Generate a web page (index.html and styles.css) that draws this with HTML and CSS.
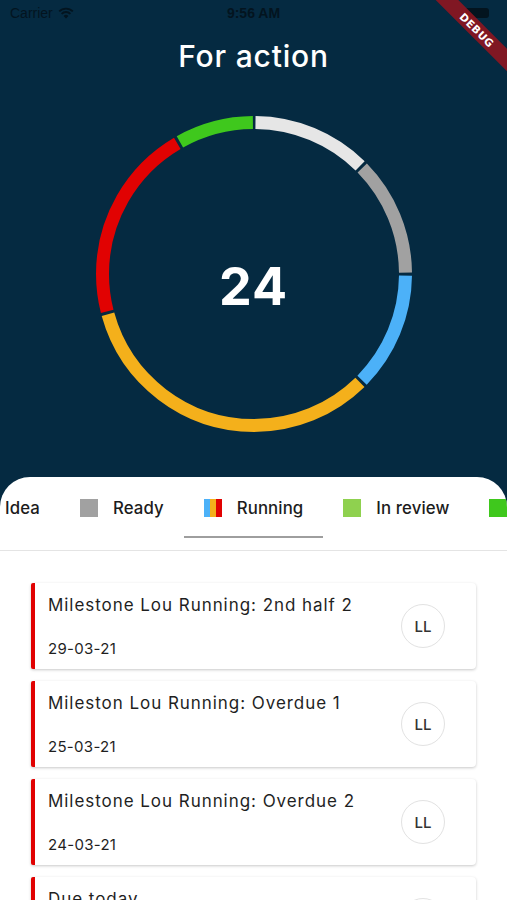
FILE: index.html
```html
<!DOCTYPE html>
<html>
<head>
<meta charset="utf-8">
<link rel="stylesheet" href="styles.css">
</head>
<body>
<div class="app">
  <header class="top">
    <div class="status">
      <div class="carrier">Carrier
        <svg class="wifi" width="16" height="12" viewBox="0 0 16 12"><path d="M8 11.5 L5.6 8.9 A3.4 3.4 0 0 1 10.4 8.9 Z" fill="#03141f"/><path d="M3.6 6.9 A6.2 6.2 0 0 1 12.4 6.9" stroke="#03141f" stroke-width="1.9" fill="none"/><path d="M1.2 4.4 A9.6 9.6 0 0 1 14.8 4.4" stroke="#03141f" stroke-width="1.9" fill="none"/></svg>
      </div>
      <div class="time">9:56 AM</div>
      <div class="battery"><span class="batt-body"></span></div>
    </div>
    <h1 class="title">For action</h1>
    <div class="donut">
      <svg width="320" height="320" viewBox="0 0 320 320">
        <g transform="rotate(-90 160 160)" fill="none" stroke-width="13">
          <circle cx="160" cy="160" r="151.5" stroke="#e6e6e6" stroke-dasharray="116 835.9" stroke-dashoffset="-1.5"/>
          <circle cx="160" cy="160" r="151.5" stroke="#a1a1a1" stroke-dasharray="116 835.9" stroke-dashoffset="-120.5"/>
          <circle cx="160" cy="160" r="151.5" stroke="#4cb1f8" stroke-dasharray="116 835.9" stroke-dashoffset="-239.5"/>
          <circle cx="160" cy="160" r="151.5" stroke="#f4b01b" stroke-dasharray="314.3 637.6" stroke-dashoffset="-358.5"/>
          <circle cx="160" cy="160" r="151.5" stroke="#e10202" stroke-dasharray="195.3 756.6" stroke-dashoffset="-675.8"/>
          <circle cx="160" cy="160" r="151.5" stroke="#3fc81d" stroke-dasharray="76.3 875.6" stroke-dashoffset="-874.1"/>
        </g>
      </svg>
      <div class="count">24</div>
    </div>
  </header>

  <section class="sheet">
    <nav class="tabs">
      <div class="tab-strip">
        <div class="tab"><span class="sq sq-idea"></span><span class="tab-label">Idea</span></div>
        <div class="tab"><span class="sq sq-ready"></span><span class="tab-label">Ready</span></div>
        <div class="tab active"><span class="sq sq-running"><i class="s-blue"></i><i class="s-yellow"></i><i class="s-red"></i></span><span class="tab-label">Running</span></div>
        <div class="tab"><span class="sq sq-review"></span><span class="tab-label">In review</span></div>
        <div class="tab"><span class="sq sq-done"></span></div>
      </div>
    </nav>
    <div class="list">
      <div class="card">
        <div class="card-text">
          <div class="card-title">Milestone Lou Running: 2nd half 2</div>
          <div class="card-date">29-03-21</div>
        </div>
        <div class="avatar">LL</div>
      </div>
      <div class="card">
        <div class="card-text">
          <div class="card-title">Mileston Lou Running: Overdue 1</div>
          <div class="card-date">25-03-21</div>
        </div>
        <div class="avatar">LL</div>
      </div>
      <div class="card">
        <div class="card-text">
          <div class="card-title">Milestone Lou Running: Overdue 2</div>
          <div class="card-date">24-03-21</div>
        </div>
        <div class="avatar">LL</div>
      </div>
      <div class="card">
        <div class="card-text">
          <div class="card-title">Due today</div>
          <div class="card-date">30-03-21</div>
        </div>
        <div class="avatar">LL</div>
      </div>
    </div>
  </section>

  <div class="debug"><span>DEBUG</span></div>
</div>
</body>
</html>
```

FILE: styles.css
```css
html, body {
  margin: 0;
  padding: 0;
}
body {
  background: #ffffff;
  font-family: "Inter", "Open Sans", "Liberation Sans", sans-serif;
  width: 507px;
  height: 900px;
  overflow: hidden;
}
.app {
  position: relative;
  width: 507px;
  height: 900px;
  overflow: hidden;
  background: #052a41;
}
.top {
  display: flex;
  flex-direction: column;
  align-items: center;
}
.status {
  width: 100%;
  height: 26px;
  display: flex;
  align-items: center;
  justify-content: space-between;
  padding: 0 10px;
  box-sizing: border-box;
  font-family: "Liberation Sans", sans-serif;
  font-size: 14px;
  color: #03141f;
}
.carrier {
  display: flex;
  align-items: center;
  gap: 5px;
  width: 120px;
}
.time {
  font-weight: bold;
  font-size: 14px;
}
.battery {
  width: 120px;
  display: flex;
  justify-content: flex-end;
}
.batt-body {
  width: 24px;
  height: 10px;
  background: #03141f;
  border-radius: 3px;
  margin-right: 8px;
}
.title {
  margin: 13px 0 0;
  font-size: 30px;
  font-weight: 500;
  color: #ffffff;
  line-height: 34px;
  letter-spacing: 0.8px;
}
.donut {
  position: relative;
  width: 320px;
  height: 320px;
  margin-top: 41px;
  display: flex;
  align-items: center;
  justify-content: center;
}
.donut svg {
  position: absolute;
  left: 0;
  top: 0;
}
.count {
  font-size: 52px;
  font-weight: 700;
  color: #ffffff;
  margin-top: 24px;
  letter-spacing: 1px;
}
.sheet {
  position: absolute;
  left: 0;
  right: 0;
  top: 477px;
  bottom: 0;
  background: #ffffff;
  border-radius: 30px 30px 0 0;
  overflow: hidden;
}
.tabs {
  height: 73px;
  border-bottom: 1px solid #e4e4e4;
  overflow: hidden;
}
.tab-strip {
  display: flex;
  margin-left: -48px;
  height: 73px;
}
.tab {
  display: flex;
  align-items: center;
  gap: 15px;
  padding: 0 20px;
  height: 61px;
  flex-shrink: 0;
  position: relative;
}
.tab-label {
  font-size: 16.8px;
  color: #1c1c1c;
  font-weight: 500;
  letter-spacing: 0.1px;
}
.tab.active::after {
  content: "";
  position: absolute;
  left: 0;
  right: 0;
  bottom: 0;
  height: 2px;
  background: #9e9e9e;
}
.sq {
  width: 18px;
  height: 18px;
  display: flex;
  flex-shrink: 0;
}
.sq-idea { background: #e6e6e6; }
.sq-ready { background: #a1a1a1; }
.sq-review { background: #8fd14f; }
.sq-done { background: #3fc81d; }
.sq-running i { flex: 1; }
.s-blue { background: #4cb1f8; }
.s-yellow { background: #f4b01b; }
.s-red { background: #e10202; }
.list {
  display: flex;
  flex-direction: column;
  gap: 12px;
  padding: 32px 31px 0 31px;
}
.card {
  display: flex;
  align-items: center;
  height: 86px;
  background: #ffffff;
  border-left: 4px solid #e10202;
  border-radius: 2px 4px 4px 2px;
  box-shadow: 0 1px 3px rgba(0, 0, 0, 0.22);
  padding: 0 31px 0 13px;
}
.card-text {
  flex: 1;
  display: flex;
  flex-direction: column;
  justify-content: space-between;
  height: 86px;
  padding: 10px 0 9px;
  box-sizing: border-box;
}
.card-title {
  font-size: 17px;
  color: #1f1f1f;
  line-height: 24px;
  letter-spacing: 0.95px;
}
.card-date {
  font-size: 15px;
  color: #1f1f1f;
  line-height: 22px;
  letter-spacing: 0.3px;
}
.avatar {
  width: 44px;
  height: 44px;
  border-radius: 50%;
  border: 1px solid #e2e2e2;
  box-sizing: border-box;
  display: flex;
  align-items: center;
  justify-content: center;
  font-size: 15px;
  font-weight: 500;
  color: #333333;
}
.debug {
  position: absolute;
  top: 0;
  right: 0;
  width: 90px;
  height: 90px;
  overflow: hidden;
  pointer-events: none;
}
.debug span {
  position: absolute;
  top: 22px;
  right: -30px;
  width: 120px;
  height: 16px;
  line-height: 16px;
  background: rgba(150, 20, 30, 0.85);
  color: #ffffff;
  font-family: "DejaVu Sans", sans-serif;
  font-weight: bold;
  font-size: 10.5px;
  text-align: center;
  letter-spacing: 0.5px;
  transform: rotate(45deg);
}
```
